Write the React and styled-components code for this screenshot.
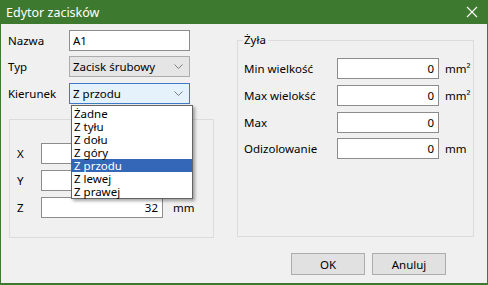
import React from "react";
import styled, { createGlobalStyle } from "styled-components";

const Global = createGlobalStyle`
  html, body { margin: 0; padding: 0; background: #f0f0f0; }
  body { font-family: "Noto Sans", "Open Sans", sans-serif; font-size: 11.5px; color: #000; }
  * { box-sizing: border-box; }
`;

const GREEN = "#3d7a30";

const Window = styled.div`
  width: 488px;
  height: 285px;
  display: flex;
  flex-direction: column;
  border-left: 1px solid ${GREEN};
  border-right: 1px solid ${GREEN};
  border-bottom: 2px solid ${GREEN};
  background: #f0f0f0;
`;

const TitleBar = styled.div`
  height: 24px;
  flex: none;
  background: ${GREEN};
  display: flex;
  align-items: center;
  justify-content: space-between;
  padding: 0 9px 0 5px;
  color: #fff;
  font-size: 12.5px;
`;

const Close = styled.div`
  width: 12px;
  height: 12px;
  display: flex;
`;

const Body = styled.div`
  flex: 1;
  display: flex;
  flex-direction: column;
  padding: 6px 0 0 7px;
`;

const Columns = styled.div`
  display: flex;
  gap: 24px;
  align-items: flex-start;
`;

const LeftCol = styled.div`
  width: 205px;
  display: flex;
  flex-direction: column;
`;

const FormRow = styled.div`
  display: flex;
  align-items: center;
  height: 21px;
  margin-top: ${(p) => p.$mt || 0}px;
  position: relative;
`;

const Label = styled.span`
  width: ${(p) => p.$w}px;
  flex: none;
  white-space: nowrap;
`;

const TextBox = styled.div`
  width: ${(p) => p.$w}px;
  height: 21px;
  flex: none;
  border: 1px solid #8c8c8c;
  background: #fff;
  display: flex;
  align-items: center;
  justify-content: ${(p) => (p.$right ? "flex-end" : "flex-start")};
  padding: ${(p) => (p.$right ? "0 4px 0 0" : "0 0 0 3px")};
  line-height: 1;
`;

const Combo = styled.div`
  width: 121px;
  height: 21px;
  flex: none;
  border: 1px solid ${(p) => (p.$focus ? "#3d7cc4" : "#acacac")};
  background: ${(p) => (p.$focus ? "#e5f1fb" : "#e5e5e5")};
  display: flex;
  align-items: center;
  justify-content: space-between;
  padding: 0 6px 0 3px;
  position: relative;
`;

const Unit = styled.span`
  margin-left: ${(p) => p.$ml || 10}px;
  white-space: nowrap;
`;

const GroupBox = styled.div`
  border: 1px solid #dcdcdc;
  position: relative;
  width: ${(p) => p.$w}px;
  height: ${(p) => p.$h}px;
  margin-top: ${(p) => p.$mt}px;
  margin-left: ${(p) => p.$ml || 0}px;
  padding: ${(p) => p.$pad};
  display: flex;
  flex-direction: column;
`;

const GroupTitle = styled.span`
  position: absolute;
  top: -9px;
  left: 5px;
  padding: 0 2px 0 1px;
  background: #f0f0f0;
  line-height: 16px;
`;

const List = styled.div`
  position: absolute;
  top: 21px;
  left: 1px;
  width: 122px;
  border: 1px solid #646464;
  background: #fff;
  box-shadow: 2px 2px 3px rgba(0, 0, 0, 0.35);
  z-index: 5;
  padding: 1px 0 0;
`;

const Item = styled.div`
  height: 13px;
  line-height: 13px;
  padding-left: 2px;
  background: ${(p) => (p.$sel ? "#3467b7" : "transparent")};
  color: ${(p) => (p.$sel ? "#fff" : "#000")};
  white-space: nowrap;
`;

const Footer = styled.div`
  display: flex;
  gap: 7px;
  padding-left: 283px;
  margin-top: 15px;
`;

const Button = styled.div`
  width: 74px;
  height: 22px;
  border: 1px solid #adadad;
  background: #e1e1e1;
  display: flex;
  align-items: center;
  justify-content: center;
`;

const Chevron = () => (
  <svg width="9" height="5" viewBox="0 0 9 5">
    <polyline points="0.5,0.5 4.5,4.5 8.5,0.5" fill="none" stroke="#707070" strokeWidth="0.9" />
  </svg>
);

const options = ["Żadne", "Z tyłu", "Z dołu", "Z góry", "Z przodu", "Z lewej", "Z prawej"];

export default function App() {
  return (
    <>
      <Global />
      <Window>
        <TitleBar>
          <span>Edytor zacisków</span>
          <Close>
            <svg width="12" height="12" viewBox="0 0 12 12">
              <path d="M1 1 L11 11 M11 1 L1 11" stroke="#fff" strokeWidth="1.1" />
            </svg>
          </Close>
        </TitleBar>
        <Body>
          <Columns>
            <LeftCol>
              <FormRow>
                <Label $w={61}>Nazwa</Label>
                <TextBox $w={121}>A1</TextBox>
              </FormRow>
              <FormRow $mt={5}>
                <Label $w={61}>Typ</Label>
                <Combo>
                  <span>Zacisk śrubowy</span>
                  <Chevron />
                </Combo>
              </FormRow>
              <FormRow $mt={6}>
                <Label $w={61}>Kierunek</Label>
                <Combo $focus>
                  <span>Z przodu</span>
                  <Chevron />
                  <List>
                    {options.map((o) => (
                      <Item key={o} $sel={o === "Z przodu"}>
                        {o}
                      </Item>
                    ))}
                  </List>
                </Combo>
              </FormRow>
              <GroupBox $w={205} $h={119} $mt={15} $ml={1} $pad="23px 0 0 7px">
                <FormRow>
                  <Label $w={24}>X</Label>
                  <TextBox $w={122} $right />
                </FormRow>
                <FormRow $mt={6}>
                  <Label $w={24}>Y</Label>
                  <TextBox $w={122} $right />
                </FormRow>
                <FormRow $mt={6}>
                  <Label $w={24}>Z</Label>
                  <TextBox $w={122} $right>32</TextBox>
                  <Unit>mm</Unit>
                </FormRow>
              </GroupBox>
            </LeftCol>
            <GroupBox $w={237} $h={197} $mt={10} $pad="17px 0 0 6px">
              <GroupTitle>Żyła</GroupTitle>
              <FormRow>
                <Label $w={93}>Min wielkość</Label>
                <TextBox $w={102} $right>0</TextBox>
                <Unit $ml={6}>mm²</Unit>
              </FormRow>
              <FormRow $mt={6}>
                <Label $w={93}>Max wielokść</Label>
                <TextBox $w={102} $right>0</TextBox>
                <Unit $ml={6}>mm²</Unit>
              </FormRow>
              <FormRow $mt={6}>
                <Label $w={93}>Max</Label>
                <TextBox $w={102} $right>0</TextBox>
              </FormRow>
              <FormRow $mt={5}>
                <Label $w={93}>Odizolowanie</Label>
                <TextBox $w={102} $right>0</TextBox>
                <Unit $ml={6}>mm</Unit>
              </FormRow>
            </GroupBox>
          </Columns>
          <Footer>
            <Button>OK</Button>
            <Button>Anuluj</Button>
          </Footer>
        </Body>
      </Window>
    </>
  );
}
